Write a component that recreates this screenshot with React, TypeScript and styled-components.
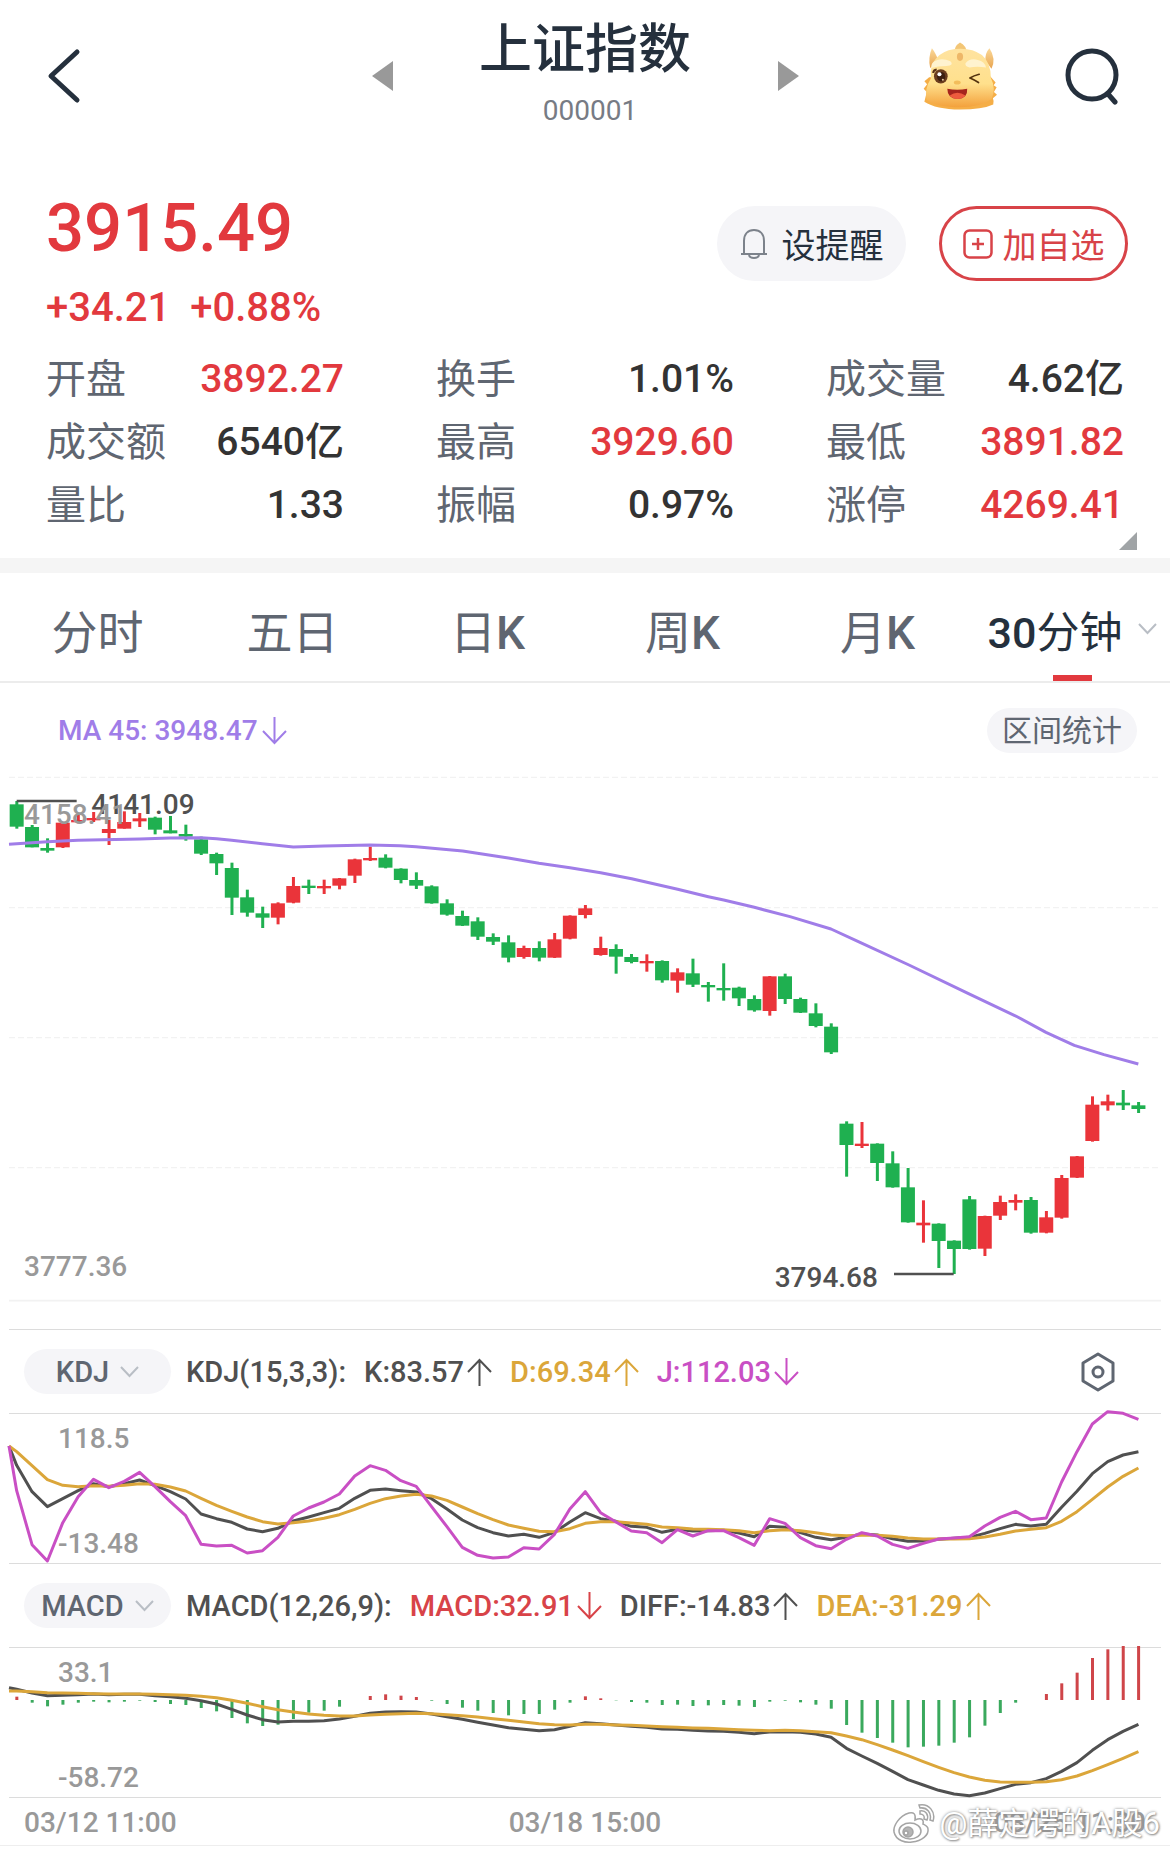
import React, { useState } from "react";
import styled, { createGlobalStyle } from "styled-components";

const GlobalStyle = createGlobalStyle`
  *, *::before, *::after { box-sizing: border-box; }
  body { margin: 0; background: #fff; }
  button, select { font: inherit; color: inherit; border: 0; background: none; padding: 0; margin: 0; cursor: pointer; }
`;

const color = {
  ink: "#25303d",
  text: "#333333",
  slate: "#5f6671",
  muted: "#999999",
  red: "#e2393e",
  redSoft: "#d84348",
  green: "#1fb050",
  purple: "#a07de8",
  gold: "#dba63a",
  magenta: "#c94fc4",
  dark: "#505050",
  line: "#dcdcdc",
};

const FONT = `Roboto, "Noto Sans CJK SC", sans-serif`;

const Page = styled.main`
  position: relative;
  background: #fff;
  font-family: ${FONT};
  color: ${color.text};
`;

const Header = styled.header`
  display: grid;
  grid-template-columns: 1fr auto 1fr;
  align-items: center;
  padding: 20px 46px 0;
`;

const IconButton = styled.button`
  display: flex;
  flex: none;
  justify-self: start;
`;

const Switcher = styled.div`
  display: flex;
  align-items: center;
`;

const TitleBlock = styled.div`
  width: 385px;
  text-align: center;
`;

const Title = styled.h1`
  margin: 0 0 11px;
  font-size: 53px;
  line-height: 60px;
  font-weight: 500;
  color: ${color.ink};
`;

const Code = styled.p`
  margin: 0;
  padding-left: 10px;
  font-size: 28px;
  line-height: 40px;
  color: #777b84;
`;

const Actions = styled.div`
  display: flex;
  align-items: center;
  justify-content: flex-end;
  gap: 68px;
  padding-right: 4px;
`;

const Quote = styled.section`
  display: flex;
  justify-content: space-between;
  align-items: flex-start;
  padding: 61px 42px 0 46px;
`;

const Price = styled.p`
  margin: 0 0 20px;
  font-size: 67px;
  line-height: 72px;
  font-weight: 500;
  color: ${color.red};
`;

const Change = styled.p`
  display: flex;
  gap: 20px;
  margin: 0;
  font-size: 40px;
  line-height: 48px;
  font-weight: 500;
  color: ${color.red};
`;

const PillGroup = styled.div`
  display: flex;
  gap: 33px;
  padding-top: 14px;
`;

const PillButton = styled.button<{ $outlined?: boolean }>`
  display: flex;
  align-items: center;
  justify-content: center;
  gap: ${(p) => (p.$outlined ? 10 : 14)}px;
  width: 189px;
  height: 75px;
  border-radius: 38px;
  font-size: 34px;
  color: ${(p) => (p.$outlined ? color.redSoft : color.ink)};
  background: ${(p) => (p.$outlined ? "#fff" : "#f5f5f8")};
  border: ${(p) => (p.$outlined ? `3px solid ${color.redSoft}` : "0")};
`;

const StatsPanel = styled.section`
  position: relative;
  padding: 16px 46px 21px;
  border-bottom: 15px solid #f5f5f5;
`;

const Stats = styled.dl`
  display: grid;
  grid-template-columns: repeat(3, 1fr);
  column-gap: 92px;
  margin: 0;
`;

const Stat = styled.div`
  display: flex;
  justify-content: space-between;
  line-height: 63px;
`;

const StatName = styled.dt`
  font-size: 40px;
  color: ${color.slate};
`;

const StatValue = styled.dd<{ $up?: boolean }>`
  margin: 0;
  font-size: 39px;
  font-weight: 500;
  color: ${(p) => (p.$up ? color.red : color.text)};
`;

const ExpandCorner = styled.button`
  position: absolute;
  right: 33px;
  bottom: 8px;
  display: flex;
`;

const Tabs = styled.nav`
  display: grid;
  grid-template-columns: repeat(6, 1fr);
  height: 110px;
  border-bottom: 2px solid #ececec;
`;

const Tab = styled.button<{ $active?: boolean }>`
  position: relative;
  display: flex;
  align-items: center;
  justify-content: center;
  gap: 16px;
  padding-top: 4px;
  font-size: ${(p) => (p.$active ? 43 : 46)}px;
  white-space: nowrap;
  color: ${(p) => (p.$active ? color.ink : color.slate)};

  &::after {
    content: "";
    display: ${(p) => (p.$active ? "block" : "none")};
    position: absolute;
    left: calc(50% - 20px);
    bottom: 0;
    width: 39px;
    height: 6px;
    background: ${color.red};
  }
`;

const TabLabel = styled.span`
  b {
    font-weight: 500;
  }
`;

const ChartBar = styled.div`
  display: flex;
  align-items: center;
  justify-content: space-between;
  padding: 25px 33px 7px 58px;
`;

const Reading = styled.span<{ $color: string }>`
  display: inline-flex;
  align-items: center;
  gap: 3px;
  font-size: 29px;
  line-height: 40px;
  font-weight: 500;
  white-space: nowrap;
  color: ${(p) => p.$color};
`;

const AverageReading = styled(Reading)`
  font-size: 28px;
  gap: 4px;
`;

const RangeButton = styled.button`
  height: 45px;
  padding: 0 15px;
  border-radius: 23px;
  background: #f5f5f8;
  font-size: 30px;
  line-height: 45px;
  color: ${color.slate};
`;

const Plot = styled.svg`
  display: block;
  width: 100%;
  height: auto;
  overflow: visible;
  font-family: ${FONT};
  font-weight: 500;
`;

const Indicator = styled.section`
  margin: 0 9px;
  border-bottom: 1px solid ${color.line};
`;

const IndicatorBar = styled.div`
  display: flex;
  align-items: center;
  height: 84px;
  padding: 0 46px 0 15px;
  border-bottom: 1px solid ${color.line};
`;

const ChartRule = styled.hr`
  margin: 0 9px;
  border: 0;
  border-top: 1px solid ${color.line};
`;

const Picker = styled.label`
  display: flex;
  flex: none;
  align-items: center;
  justify-content: center;
  gap: 11px;
  width: 147px;
  height: 45px;
  margin-right: 15px;
  border-radius: 23px;
  background: #f5f5f8;
`;

const PickerSelect = styled.select`
  appearance: none;
  field-sizing: content;
  outline: 0;
  font-size: 29px;
  line-height: 40px;
  font-weight: 500;
  color: ${color.slate};
`;

const Readings = styled.div`
  display: flex;
  flex: 1;
  gap: 18px;
`;

const Params = styled.span<{ $width: number }>`
  min-width: ${(p) => p.$width}px;
  font-size: 29px;
  line-height: 40px;
  font-weight: 500;
  white-space: nowrap;
  color: ${color.dark};
`;

const Dates = styled.footer`
  display: flex;
  justify-content: space-between;
  padding: 3px 24px 0;
  font-size: 28px;
  line-height: 44px;
  font-weight: 500;
  color: ${color.muted};
  border-bottom: 1px solid #eeeeee;
`;

const Watermark = styled.div`
  position: absolute;
  right: 10px;
  bottom: 0;
  display: flex;
  align-items: center;
  gap: 4px;
  font-size: 31px;
  line-height: 44px;
  color: #fff;
  text-shadow: 0 0 3px #888, 1px 1px 2px #999;
`;

/* ---------- icons ---------- */

const Arrow = ({ up }: { up?: boolean }) => (
  <svg width="25" height="28" viewBox="0 0 25 28" fill="none" stroke="currentColor" strokeWidth="2" aria-hidden="true">
    {up ? <path d="M12.500 28V2M1 14L12.500 2L24 14" /> : <path d="M12.500 0V26M1 14L12.500 26L24 14" />}
  </svg>
);

const Chevron = () => (
  <svg width="19" height="12" viewBox="0 0 19 12" fill="none" stroke="#b9bec5" strokeWidth="2" aria-hidden="true">
    <path d="M1 1L9.500 10L18 1" />
  </svg>
);

const Mascot = () => (
  <svg width="74" height="68" viewBox="72 32 216 198" aria-hidden="true">
    <defs>
      <linearGradient id="face" x1="0" y1="0" x2="0" y2="1">
        <stop offset="0" stopColor="#ffe3a0" />
        <stop offset="0.6" stopColor="#ffe08c" />
        <stop offset="1" stopColor="#f3a13c" />
      </linearGradient>
      <linearGradient id="horn" x1="0" y1="0" x2="0" y2="1">
        <stop offset="0" stopColor="#fbd99a" />
        <stop offset="1" stopColor="#e8a44f" />
      </linearGradient>
    </defs>
    <path d="M90 135L76 146L84 155L74 168L83 178L76 206Q110 228 180 229Q245 229 277 214Q280 205 276 196L288 186L279 178L287 164L278 158L284 150L268 132Z" fill="#f5ae47" />
    <path d="M98 50Q86 78 93 108L118 88Q108 62 98 50Z" fill="url(#horn)" />
    <path d="M266 50Q253 64 254 86L272 110Q286 80 266 50Z" fill="url(#horn)" />
    <path d="M180 33Q162 44 164 64L200 62Q198 42 180 33Z" fill="#f3c676" />
    <path d="M110 80Q126 58 165 52Q214 47 244 70Q270 92 270 136Q286 168 272 198Q240 222 180 222Q112 222 82 200Q76 168 95 138Q92 98 110 80Z" fill="url(#face)" />
    <ellipse cx="180" cy="75" rx="9" ry="12" fill="#eeb768" />
    <path d="M96 108Q94 90 114 84Q132 78 152 88Q164 100 140 102Q115 102 96 108Z" fill="#fff3cf" />
    <path d="M196 94Q208 78 232 84Q252 88 256 106Q230 102 208 106Q194 104 196 94Z" fill="#fff3cf" />
    <ellipse cx="124" cy="132" rx="20" ry="21" fill="#6b3d1e" />
    <ellipse cx="125" cy="133" rx="12" ry="14" fill="#3d1f10" />
    <circle cx="120" cy="126" r="6" fill="#fff" />
    <circle cx="130" cy="142" r="3" fill="#e9c9a0" />
    <path d="M102 122Q102 113 112 112" stroke="#5a3116" strokeWidth="6" fill="none" />
    <path d="M236 126Q220 130 209 137Q222 142 234 150" stroke="#54330f" strokeWidth="5" fill="none" strokeLinecap="round" strokeLinejoin="round" />
    <ellipse cx="172" cy="150" rx="10" ry="6" fill="#f3bd5b" />
    <path d="M143 168Q172 174 201 168Q203 197 173 198Q143 197 143 168Z" fill="#a6251d" />
    <path d="M150 188Q172 172 196 188Q188 198 173 198Q158 198 150 188Z" fill="#ee5b3e" />
  </svg>
);

const WeiboMark = () => (
  <svg width="44" height="42" viewBox="0 0 44 42" fill="#fff" stroke="#a5a5a5" strokeWidth="1.5" aria-hidden="true">
    <path d="M17 10C7 13 1 23 2 29C4 38 14 40 20 39C30 38 37 32 36 26C36 23 33 22 31 21C32 17 30 14 23 17C24 11 22 9 17 10Z" />
    <ellipse cx="18" cy="28" rx="11" ry="8" />
    <circle cx="16" cy="29" r="5" fill="#b5b5b5" />
    <circle cx="14" cy="30" r="2" />
    <path d="M27 2C37 0 44 9 41 18L38 17C40 10 35 4 28 5Z" />
    <path d="M28 8C34 7 37 12 35 17L32 16C33 13 31 11 28 11Z" />
  </svg>
);

/* ---------- chart data ---------- */

const STEP = 46.1;
const X0 = 50;
const xAt = (i: number) => X0 + STEP * i;

// direction, high, body top, body bottom, low
type Candle = ["u" | "d", number, number, number, number];
const candles: Candle[] = [
  ["d", 333, 343, 410, 416], ["d", 405, 411, 472, 472], ["d", 445, 474, 482, 488], ["u", 396, 398, 472, 474],
  ["u", 370, 390, 397, 400], ["u", 366, 384, 390, 396], ["u", 390, 417, 429, 465], ["u", 364, 396, 416, 416],
  ["u", 369, 385, 394, 411], ["d", 380, 383, 419, 433], ["d", 378, 421, 430, 430], ["d", 404, 432, 440, 452],
  ["d", 440, 448, 491, 495], ["d", 488, 492, 520, 555], ["d", 518, 534, 623, 675], ["d", 599, 622, 668, 680],
  ["d", 650, 670, 683, 714], ["u", 637, 640, 683, 703], ["u", 561, 588, 638, 640], ["d", 569, 587, 594, 612],
  ["u", 569, 588, 595, 612], ["u", 564, 565, 587, 598], ["u", 506, 508, 557, 579], ["u", 470, 504, 511, 513],
  ["d", 493, 503, 533, 535], ["d", 535, 536, 570, 580], ["d", 547, 570, 587, 597], ["d", 586, 589, 640, 641],
  ["d", 628, 640, 674, 677], ["d", 662, 678, 707, 708], ["d", 682, 694, 740, 750], ["d", 730, 741, 755, 765],
  ["d", 736, 757, 803, 817], ["u", 767, 774, 801, 806], ["d", 754, 774, 803, 814], ["u", 729, 748, 803, 804],
  ["u", 676, 677, 746, 748], ["u", 645, 655, 675, 685], ["u", 740, 774, 795, 797], ["d", 763, 777, 800, 851],
  ["d", 792, 801, 816, 820], ["u", 793, 813, 820, 845], ["d", 811, 813, 871, 878], ["u", 835, 847, 872, 908],
  ["d", 806, 850, 884, 891], ["d", 876, 885, 892, 935], ["d", 820, 894, 901, 932], ["d", 890, 893, 925, 948],
  ["d", 916, 927, 961, 965], ["u", 858, 859, 963, 977], ["d", 851, 859, 927, 942], ["d", 923, 927, 968, 969],
  ["d", 940, 970, 1008, 1012], ["d", 1000, 1010, 1087, 1092], ["d", 1294, 1301, 1365, 1460], ["u", 1296, 1361, 1368, 1374],
  ["d", 1360, 1361, 1419, 1473], ["d", 1384, 1420, 1492, 1493], ["d", 1434, 1492, 1597, 1598], ["u", 1531, 1598, 1606, 1658],
  ["d", 1600, 1601, 1653, 1734], ["d", 1651, 1652, 1677, 1752], ["d", 1518, 1528, 1677, 1679], ["u", 1577, 1578, 1676, 1698],
  ["u", 1517, 1536, 1577, 1590], ["u", 1513, 1530, 1538, 1561], ["d", 1521, 1530, 1628, 1631], ["u", 1563, 1582, 1628, 1630],
  ["u", 1455, 1464, 1583, 1586], ["u", 1398, 1399, 1463, 1464], ["u", 1219, 1244, 1353, 1355], ["u", 1214, 1234, 1246, 1262],
  ["d", 1200, 1238, 1246, 1260], ["d", 1236, 1246, 1257, 1269],
];

const average =
  "27,463 142,455 234,451 420,447 510,444 603,443 650,446 695,451 787,461 880,471 972,468 1110,465 1200,467 1248,470 1388,483 1432,490 1525,504 1617,520 1710,533 1802,548 1895,566 2033,598 2125,620 2171,630 2263,652 2370,680 2493,717 2580,757 2727,825 2904,910 3053,981 3138,1027 3223,1066 3312,1094 3415,1122";

const kLine = [
  436, 515, 560, 536, 512, 491, 500, 491, 480, 497, 515, 537, 582, 596, 607, 627, 635, 625, 603, 591, 578, 565, 535, 511, 507,
  512, 516, 536, 567, 600, 623, 638, 648, 643, 652, 637, 606, 578, 596, 604, 619, 622, 637, 628, 633, 632, 631, 639, 650, 619,
  622, 638, 652, 659, 652, 642, 645, 656, 664, 663, 658, 655, 652, 640, 626, 613, 618, 613, 562, 514, 461, 425, 405, 395,
];
const dLine = [
  395, 437, 479, 496, 500, 497, 499, 496, 491, 493, 501, 513, 535, 556, 574, 591, 605, 612, 608, 603, 595, 584, 568, 550, 536,
  528, 523, 528, 541, 561, 581, 599, 615, 625, 634, 635, 626, 610, 605, 605, 609, 613, 621, 623, 627, 628, 629, 632, 638, 632,
  629, 632, 638, 645, 647, 646, 646, 649, 654, 657, 657, 657, 656, 651, 643, 633, 628, 623, 604, 575, 538, 501, 469, 444,
];
const jLine = [
  512, 674, 723, 608, 530, 478, 503, 484, 457, 500, 545, 587, 673, 678, 676, 699, 692, 652, 588, 564, 546, 522, 468, 437, 451,
  482, 499, 560, 620, 682, 706, 714, 711, 683, 687, 643, 567, 515, 578, 606, 633, 638, 668, 629, 648, 632, 632, 653, 676, 596,
  610, 653, 677, 686, 658, 638, 648, 673, 685, 670, 657, 654, 650, 618, 592, 574, 599, 594, 486, 395, 312, 275, 280, 298,
];
const macdBars = [
  380, 398, 409, 404, 398, 395, 397, 395, 392, 396, 402, 405, 414, 424, 444, 460, 468, 464, 447, 428, 422, 410, 390, 378, 373,
  377, 381, 392, 402, 413, 422, 429, 436, 432, 432, 419, 398, 379, 385, 391, 396, 398, 405, 404, 408, 406, 405, 407, 411, 395,
  392, 397, 404, 416, 465, 488, 504, 518, 532, 530, 527, 518, 502, 467, 429, 398, 390, 372, 340, 308, 264, 238, 228, 228,
];
const diffLine = [
  358, 369, 377, 376, 374, 372, 374, 373, 373, 377, 380, 385, 392, 402, 418, 435, 449, 456, 454, 454, 452, 447, 439, 430, 426,
  425, 426, 432, 440, 448, 457, 465, 473, 478, 482, 479, 469, 458, 461, 465, 469, 472, 477, 478, 481, 483, 484, 487, 491, 486,
  485, 487, 492, 502, 535, 558, 580, 604, 629, 645, 661, 672, 677, 669, 656, 643, 638, 626, 604, 578, 541, 509, 484, 463,
];
const deaLine = [
  363, 365, 368, 369, 370, 371, 372, 372, 372, 373, 374, 376, 379, 383, 391, 400, 410, 419, 426, 432, 436, 438, 438, 435, 433,
  431, 430, 431, 434, 437, 441, 446, 451, 456, 461, 464, 465, 463, 463, 465, 466, 468, 470, 472, 474, 475, 477, 479, 481, 482,
  481, 482, 485, 488, 498, 509, 524, 540, 557, 575, 592, 608, 621, 631, 636, 637, 637, 635, 629, 618, 602, 584, 565, 545,
];

const Series = ({ start, data, stroke }: { start: number; data: number[]; stroke: string }) => (
  <polyline
    points={[`27,${start}`, ...data.map((y, i) => `${xAt(i)},${y}`)].join(" ")}
    fill="none"
    stroke={stroke}
    strokeWidth="9"
    strokeLinejoin="round"
  />
);

const AxisText = ({ x, y, fill = color.muted, children }: { x: number; y: number; fill?: string; children: string }) => (
  <text x={x} y={y} fontSize="84" fill={fill}>
    {children}
  </text>
);

const PriceChart = () => (
  <Plot viewBox="0 210 3510 1707" role="img" aria-label="上证指数 30分钟 K线">
    {[262, 653, 1043, 1433].map((y) => (
      <line key={y} x1="27" x2="3483" y1={y} y2={y} stroke="#f2f2f2" strokeWidth="4" strokeDasharray="18 9" />
    ))}
    <line x1="27" x2="3483" y1="1832" y2="1832" stroke="#f2f2f2" strokeWidth="5" />
    {candles.map(([dir, high, top, bottom, low], i) => (
      <g key={i} fill={dir === "u" ? "#ea343a" : color.green}>
        <rect x={xAt(i) - 4} y={high} width="9" height={low - high} />
        <rect x={xAt(i) - 21} y={top} width="42" height={Math.max(bottom - top, 7)} />
      </g>
    ))}
    <polyline points={average} fill="none" stroke={color.purple} strokeWidth="9" strokeLinejoin="round" />
    <path d="M50 333H230M2682 1752H2861" stroke={color.dark} strokeWidth="8" />
    <AxisText x={274} y={372} fill={color.dark}>4141.09</AxisText>
    <AxisText x={72} y={401}>4158.41</AxisText>
    <AxisText x={72} y={1758}>3777.36</AxisText>
    <AxisText x={2324} y={1790} fill={color.dark}>3794.68</AxisText>
  </Plot>
);

const KdjChart = () => (
  <Plot viewBox="27 282 3456 447" role="img" aria-label="KDJ">
    <AxisText x={174} y={384}>118.5</AxisText>
    <AxisText x={174} y={699}>-13.48</AxisText>
    <Series start={378} data={kLine} stroke={color.dark} />
    <Series start={378} data={dLine} stroke={color.gold} />
    <Series start={378} data={jLine} stroke={color.magenta} />
  </Plot>
);

const MacdChart = () => (
  <Plot viewBox="27 234 3456 447" role="img" aria-label="MACD">
    <AxisText x={174} y={336}>33.1</AxisText>
    <AxisText x={174} y={651}>-58.72</AxisText>
    {macdBars.map((y, i) => (
      <rect
        key={i}
        x={xAt(i) - 4}
        y={Math.min(y, 390)}
        width="9"
        height={Math.abs(y - 390)}
        fill={y < 390 ? "#cf4549" : "#3aa95d"}
      />
    ))}
    <Series start={353} data={diffLine} stroke={color.dark} />
    <Series start={363} data={deaLine} stroke={color.gold} />
  </Plot>
);

const stats = [
  { name: "开盘", value: "3892.27", up: true },
  { name: "换手", value: "1.01%" },
  { name: "成交量", value: "4.62亿" },
  { name: "成交额", value: "6540亿" },
  { name: "最高", value: "3929.60", up: true },
  { name: "最低", value: "3891.82", up: true },
  { name: "量比", value: "1.33" },
  { name: "振幅", value: "0.97%" },
  { name: "涨停", value: "4269.41", up: true },
];

type Period = { id: string; label: React.ReactNode; more?: boolean };
const periods: Period[] = [
  { id: "minute", label: "分时" },
  { id: "five", label: "五日" },
  { id: "day", label: <>日<b>K</b></> },
  { id: "week", label: <>周<b>K</b></> },
  { id: "month", label: <>月<b>K</b></> },
  { id: "half", label: <><b>30</b>分钟</>, more: true },
];

const IndicatorPicker = ({ initial }: { initial: string }) => {
  const [value, setValue] = useState(initial);
  return (
    <Picker>
      <PickerSelect aria-label="指标" value={value} onChange={(e) => setValue(e.target.value)}>
        <option>KDJ</option>
        <option>MACD</option>
      </PickerSelect>
      <Chevron />
    </Picker>
  );
};

export default function App() {
  const [period, setPeriod] = useState("half");
  return (
    <Page>
      <GlobalStyle />
      <Header>
        <IconButton aria-label="返回">
          <svg width="36" height="56" viewBox="0 0 36 56" fill="none" stroke={color.ink} strokeWidth="5" strokeLinecap="round" strokeLinejoin="round">
            <path d="M31 4L5 28L31 52" />
          </svg>
        </IconButton>
        <Switcher>
          <IconButton aria-label="上一个">
            <svg width="21" height="30" viewBox="0 0 21 30" fill="#999"><path d="M21 0V30L0 15Z" /></svg>
          </IconButton>
          <TitleBlock>
            <Title>上证指数</Title>
            <Code>000001</Code>
          </TitleBlock>
          <IconButton aria-label="下一个">
            <svg width="21" height="30" viewBox="0 0 21 30" fill="#999"><path d="M0 0V30L21 15Z" /></svg>
          </IconButton>
        </Switcher>
        <Actions>
          <IconButton aria-label="助手"><Mascot /></IconButton>
          <IconButton aria-label="搜索">
            <svg width="55" height="58" viewBox="0 0 55 58" fill="none" stroke={color.ink} strokeWidth="5" strokeLinecap="round">
              <circle cx="27" cy="28" r="24" />
              <path d="M43 47L50 55" />
            </svg>
          </IconButton>
        </Actions>
      </Header>

      <Quote>
        <div>
          <Price>3915.49</Price>
          <Change><span>+34.21</span><span>+0.88%</span></Change>
        </div>
        <PillGroup>
          <PillButton>
            <svg width="28" height="30" viewBox="0 0 28 30" fill="none" stroke="#7c828b" strokeWidth="2" strokeLinejoin="round" aria-hidden="true">
              <path d="M1 25H27M4 25V12C4 5 8 1 14 1S24 5 24 12V25" />
              <path d="M9 26C10 30 18 30 19 26" />
            </svg>
            设提醒
          </PillButton>
          <PillButton $outlined>
            <svg width="30" height="30" viewBox="0 0 30 30" fill="none" stroke="currentColor" strokeWidth="2.500" aria-hidden="true">
              <rect x="1.500" y="1.500" width="27" height="27" rx="5" />
              <path d="M15 9V21M9 15H21" />
            </svg>
            加自选
          </PillButton>
        </PillGroup>
      </Quote>

      <StatsPanel>
        <Stats>
          {stats.map((s) => (
            <Stat key={s.name}>
              <StatName>{s.name}</StatName>
              <StatValue $up={s.up}>{s.value}</StatValue>
            </Stat>
          ))}
        </Stats>
        <ExpandCorner aria-label="展开">
          <svg width="18" height="18" viewBox="0 0 18 18" fill="#a0a4a6"><path d="M18 0V18H0Z" /></svg>
        </ExpandCorner>
      </StatsPanel>

      <Tabs>
        {periods.map((p) => (
          <Tab key={p.id} $active={p.id === period} onClick={() => setPeriod(p.id)}>
            <TabLabel>{p.label}</TabLabel>
            {p.more && <Chevron />}
          </Tab>
        ))}
      </Tabs>

      <section>
        <ChartBar>
          <AverageReading $color={color.purple}>MA 45: 3948.47<Arrow /></AverageReading>
          <RangeButton>区间统计</RangeButton>
        </ChartBar>
        <PriceChart />
        <ChartRule />
      </section>

      <Indicator>
        <IndicatorBar>
          <IndicatorPicker initial="KDJ" />
          <Readings>
            <Params $width={160}>KDJ(15,3,3):</Params>
            <Reading $color={color.dark}>K:83.57<Arrow up /></Reading>
            <Reading $color={color.gold}>D:69.34<Arrow up /></Reading>
            <Reading $color={color.magenta}>J:112.03<Arrow /></Reading>
          </Readings>
          <IconButton aria-label="指标设置">
            <svg width="34" height="40" viewBox="0 0 34 40" fill="none" stroke={color.slate} strokeWidth="3" strokeLinejoin="round">
              <path d="M17 2L32 11V29L17 38L2 29V11Z" />
              <circle cx="17" cy="20" r="5" />
            </svg>
          </IconButton>
        </IndicatorBar>
        <KdjChart />
      </Indicator>

      <Indicator>
        <IndicatorBar>
          <IndicatorPicker initial="MACD" />
          <Readings>
            <Params $width={203}>MACD(12,26,9):</Params>
            <Reading $color={color.redSoft}>MACD:32.91<Arrow /></Reading>
            <Reading $color={color.dark}>DIFF:-14.83<Arrow up /></Reading>
            <Reading $color={color.gold}>DEA:-31.29<Arrow up /></Reading>
          </Readings>
        </IndicatorBar>
        <MacdChart />
      </Indicator>

      <Dates>
        <time>03/12 11:00</time>
        <time>03/18 15:00</time>
        <time>03/25 11:30</time>
      </Dates>
      <Watermark>
        <WeiboMark />
        @薛定谔的A股6
      </Watermark>
    </Page>
  );
}
